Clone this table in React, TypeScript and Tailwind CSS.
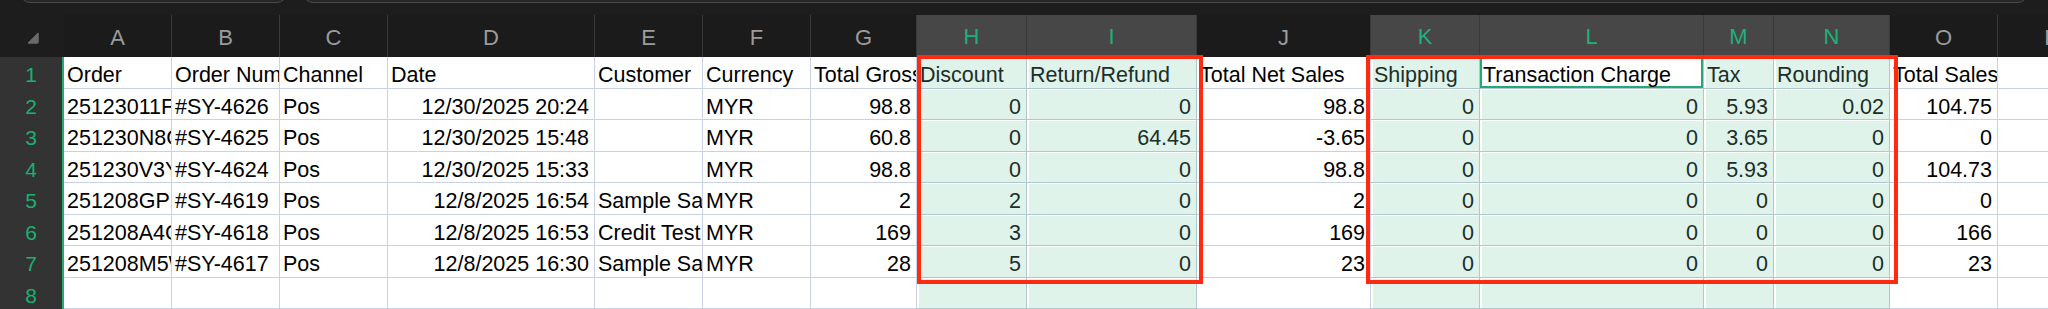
import React from 'react';

type Col = { key: string; width: string; align: 'left' | 'right'; selected?: boolean };

const columns: Col[] = [
  { key: 'A', width: 'w-[108px]', align: 'left' },
  { key: 'B', width: 'w-[108px]', align: 'left' },
  { key: 'C', width: 'w-[108px]', align: 'left' },
  { key: 'D', width: 'w-[207px]', align: 'right' },
  { key: 'E', width: 'w-[108px]', align: 'left' },
  { key: 'F', width: 'w-[108px]', align: 'left' },
  { key: 'G', width: 'w-[106px]', align: 'right' },
  { key: 'H', width: 'w-[110px]', align: 'right', selected: true },
  { key: 'I', width: 'w-[170px]', align: 'right', selected: true },
  { key: 'J', width: 'w-[174px]', align: 'right' },
  { key: 'K', width: 'w-[109px]', align: 'right', selected: true },
  { key: 'L', width: 'w-[224px]', align: 'right', selected: true },
  { key: 'M', width: 'w-[70px]', align: 'right', selected: true },
  { key: 'N', width: 'w-[116px]', align: 'right', selected: true },
  { key: 'O', width: 'w-[108px]', align: 'right' },
  { key: 'P', width: 'w-[108px]', align: 'right' },
];

const headerRow = [
  'Order', 'Order Number', 'Channel', 'Date', 'Customer', 'Currency', 'Total Gross Sales',
  'Discount', 'Return/Refund', 'Total Net Sales', 'Shipping', 'Transaction Charge', 'Tax', 'Rounding', 'Total Sales', '',
];

const rows: string[][] = [
  ['25123011FQ2K', '#SY-4626', 'Pos', '12/30/2025 20:24', '', 'MYR', '98.8', '0', '0', '98.8', '0', '0', '5.93', '0.02', '104.75', ''],
  ['251230N8G4TA', '#SY-4625', 'Pos', '12/30/2025 15:48', '', 'MYR', '60.8', '0', '64.45', '-3.65', '0', '0', '3.65', '0', '0', ''],
  ['251230V3YR7B', '#SY-4624', 'Pos', '12/30/2025 15:33', '', 'MYR', '98.8', '0', '0', '98.8', '0', '0', '5.93', '0', '104.73', ''],
  ['251208GPMWQ', '#SY-4619', 'Pos', '12/8/2025 16:54', 'Sample Sales', 'MYR', '2', '2', '0', '2', '0', '0', '0', '0', '0', ''],
  ['251208A4C9XK', '#SY-4618', 'Pos', '12/8/2025 16:53', 'Credit Test', 'MYR', '169', '3', '0', '169', '0', '0', '0', '0', '166', ''],
  ['251208M5WQZ', '#SY-4617', 'Pos', '12/8/2025 16:30', 'Sample Sales', 'MYR', '28', '5', '0', '23', '0', '0', '0', '0', '23', ''],
  ['', '', '', '', '', '', '', '', '', '', '', '', '', '', '', ''],
];

function Cell({ col, value, header, active }: { col: Col; value: string; header?: boolean; active?: boolean }) {
  const align = header ? 'text-left' : col.align === 'right' ? 'text-right' : 'text-left';
  let tone = 'bg-white border-[#c9d2e4] text-black';
  if (col.selected) tone = 'bg-[#dff3eb] border-[#b0c7cf] text-[#1b2e27] shadow-[inset_2px_1px_0_#ffffff]';
  if (active) tone = 'bg-white border-[#b0c7cf] text-black shadow-[inset_0_0_0_2px_#25a874]';
  return (
    <div
      className={`${col.width} ${tone} ${align} h-[31.5px] shrink-0 overflow-hidden whitespace-nowrap border-r border-b pl-[3px] pr-[5px] text-[21.5px] leading-[36px]`}
    >
      {value}
    </div>
  );
}

export default function App() {
  return (
    <div className="relative h-[309px] w-[2048px] overflow-hidden bg-[#1d1d1d] font-['Liberation_Sans',Arial,sans-serif]">
      {/* toolbar edge */}
      <div className="flex h-[15px] gap-[16px] overflow-hidden px-[20px]">
        <div className="-mt-[38px] h-[41px] w-[267px] shrink-0 rounded-[10px] border border-[#4a4a4a] bg-[#262626]" />
        <div className="-mt-[38px] h-[41px] flex-1 rounded-[10px] border border-[#4a4a4a] bg-[#262626]" />
      </div>

      {/* column letters */}
      <div className="flex h-[42px]">
        <div className="flex w-[64px] shrink-0 items-end justify-center pb-[13px] pl-[2px]">
          <svg width="12" height="12" viewBox="0 0 12 12">
            <path d="M11 1.5 L11 10 Q11 11 10 11 L1.5 11 Z" fill="#6b6b6b" stroke="#6b6b6b" strokeLinejoin="round" strokeWidth="1.5" />
          </svg>
        </div>
        {columns.map((col) => (
          <div
            key={col.key}
            className={`${col.width} ${
              col.selected ? 'border-b-2 border-b-[#22a873] bg-[#474747] text-[#1fb07a]' : 'bg-[#1b1b1b] text-[#9b9b9b]'
            } flex h-[42px] shrink-0 items-center justify-center border-r border-r-[#3a3a3a] pt-[2px] text-[22px]`}
          >
            {col.key}
          </div>
        ))}
      </div>

      {/* rows */}
      {[headerRow, ...rows].map((row, r) => (
        <div key={r} className="flex">
          <div className="h-[31.5px] w-[64px] shrink-0 border-r-2 border-r-[#20ad75] bg-[#333333] text-center text-[21px] leading-[36px] text-[#1bb073]">
            {r + 1}
          </div>
          {columns.map((col, c) => (
            <Cell key={col.key} col={col} value={row[c]} header={r === 0} active={r === 0 && col.key === 'L'} />
          ))}
        </div>
      ))}

      {/* annotation boxes */}
      <div className="absolute left-[917px] top-[55px] h-[229px] w-[286px] border-4 border-[#ff2a12]" />
      <div className="absolute left-[1366px] top-[55px] h-[229px] w-[532px] border-4 border-[#ff2a12]" />
    </div>
  );
}
